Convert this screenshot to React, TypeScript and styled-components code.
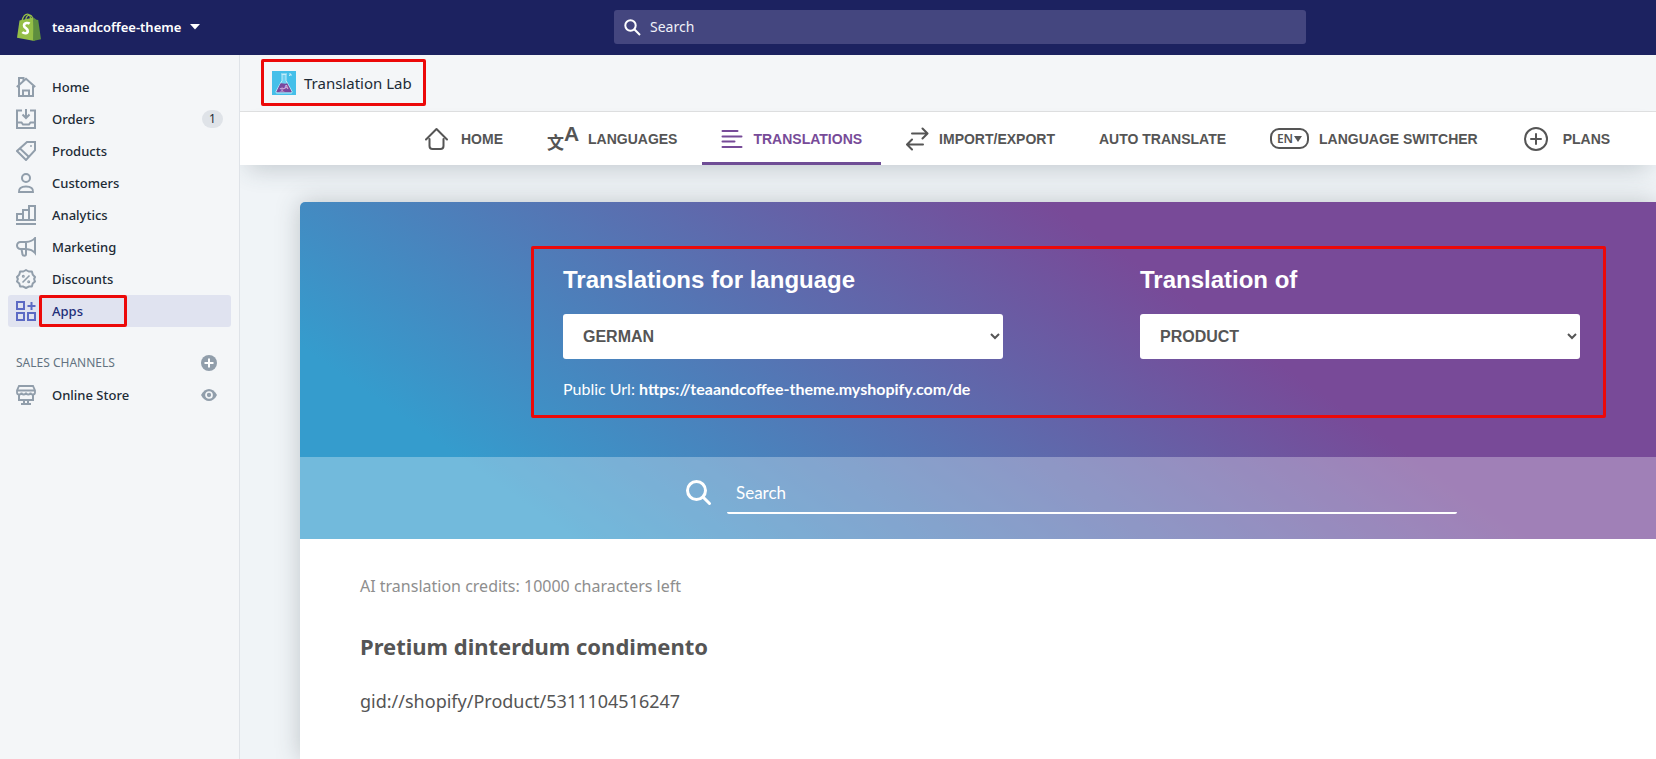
import React from 'react';
import styled, { createGlobalStyle, css } from 'styled-components';

const ui = '"Noto Sans", "Open Sans", sans-serif';
const arial = '"Liberation Sans", Arial, sans-serif';
const lato = 'Lato, "Noto Sans", sans-serif';

const GlobalStyle = createGlobalStyle`
  *, *::before, *::after { box-sizing: border-box; }
  body { margin: 0; font-family: ${ui}; background: #f4f6f8; color: #212b36; }
  h1, h2, p, ul { margin: 0; padding: 0; }
  ul { list-style: none; }
  a { color: inherit; text-decoration: none; }
  button { font: inherit; color: inherit; background: none; border: 0; padding: 0; cursor: pointer; }
  svg { display: block; flex: none; }
`;

const highlight = css`
  border: 3px solid #ec0909;
  border-radius: 2px;
`;

const Page = styled.div`
  display: flex;
  flex-direction: column;
  min-height: 100vh;
`;

const TopBar = styled.header`
  display: grid;
  grid-template-columns: 240px minmax(200px, 692px);
  column-gap: 374px;
  align-items: center;
  height: 55px;
  padding-bottom: 1px;
  background: #1c2260;
  color: #fff;
`;

const StoreButton = styled.button`
  display: flex;
  align-items: center;
  gap: 11px;
  padding-left: 16px;
  font-size: 13px;
  font-weight: 600;
  line-height: 20px;
`;

const StoreName = styled.span`
  display: flex;
  align-items: center;
  gap: 9px;
`;

const TopSearch = styled.label`
  display: flex;
  align-items: center;
  gap: 9px;
  height: 34px;
  padding: 0 10px;
  border-radius: 3px;
  background: #44467f;
`;

const TopSearchInput = styled.input`
  flex: 1;
  min-width: 0;
  border: 0;
  padding: 0;
  outline: 0;
  background: transparent;
  color: #fff;
  font: 14px/20px ${ui};
  &::placeholder { color: #f0f1f8; opacity: 1; }
`;

const Body = styled.div`
  display: flex;
  flex: 1;
`;

const Sidebar = styled.nav`
  flex: none;
  width: 240px;
  padding: 16px 8px;
  border-right: 1px solid #dfe3e8;
  background: #f4f6f8;
`;

const NavRow = styled.li<{ $active?: boolean }>`
  display: flex;
  align-items: center;
  height: 32px;
  padding-right: 14px;
  border-radius: 3px;
  background: ${p => (p.$active ? '#e0e3f0' : 'transparent')};
  color: ${p => (p.$active ? '#202e78' : '#212b36')};
`;

const NavLink = styled.a`
  position: relative;
  display: flex;
  flex: 1;
  align-items: center;
  gap: 16px;
  padding-left: 8px;
  font-size: 13px;
  font-weight: 500;
  line-height: 32px;
`;

const NavIcon = styled.svg<{ $active?: boolean }>`
  width: 20px;
  height: 20px;
  fill: none;
  stroke: ${p => (p.$active ? '#5c6ac4' : '#919eab')};
  stroke-width: 2;
`;

const AppsMark = styled.span`
  ${highlight}
  position: absolute;
  left: 31px;
  top: 0;
  width: 88px;
  height: 32px;
`;

const CountBadge = styled.span`
  min-width: 21px;
  margin-right: -6px;
  border-radius: 9px;
  background: #dfe3e8;
  color: #212b36;
  font-size: 12px;
  line-height: 18px;
  text-align: center;
`;

const SectionHead = styled.div`
  display: flex;
  align-items: center;
  justify-content: space-between;
  height: 32px;
  margin-top: 20px;
  padding: 0 14px 0 8px;
`;

const SectionTitle = styled.h2`
  color: #637381;
  font-size: 12px;
  font-weight: 400;
  line-height: 20px;
`;

const Main = styled.main`
  display: flex;
  flex: 1;
  flex-direction: column;
  min-width: 0;
  overflow: hidden;
  background: #f0f4f7;
`;

const AppHeader = styled.div`
  height: 57px;
  padding: 4px 0 0 21px;
  border-bottom: 1px solid #dfe0e1;
  background: #f4f6f8;
`;

const AppTitle = styled.h1`
  ${highlight}
  display: flex;
  align-items: center;
  gap: 8px;
  width: 165px;
  height: 47px;
  padding-left: 8px;
  font-size: 15px;
  font-weight: 400;
  line-height: 24px;
`;

const Tabs = styled.nav`
  display: flex;
  gap: 6px;
  height: 53px;
  padding-left: 166px;
  background: #fff;
  box-shadow: 0 12px 24px -8px rgba(50, 65, 80, 0.24);
`;

const Tab = styled.a<{ $active?: boolean }>`
  display: flex;
  flex: none;
  align-items: center;
  gap: 10px;
  padding: 3px 19px 0;
  border-bottom: 3px solid ${p => (p.$active ? '#6f4d96' : 'transparent')};
  color: ${p => (p.$active ? '#774b98' : '#555')};
  font: 700 14px/20px ${arial};
`;

const TabIcon = styled.svg`
  fill: none;
  stroke: currentColor;
  stroke-width: 2;
  stroke-linecap: round;
  stroke-linejoin: round;
`;

const LanguageGlyph = styled.span`
  display: flex;
  width: 31px;
  height: 26px;
  line-height: 20px;
`;

const Han = styled.span`
  align-self: flex-end;
  width: 17px;
  font: 700 17px/20px "Noto Sans CJK SC", sans-serif;
`;

const Latin = styled.span`
  font: 700 21px/16px ${arial};
`;

const EnPill = styled.span`
  display: flex;
  align-items: center;
  justify-content: center;
  gap: 1px;
  width: 39px;
  height: 21px;
  border: 2px solid currentColor;
  border-radius: 9px;
  font: 600 12px/17px "Noto Sans", sans-serif;
`;

const Card = styled.section`
  display: flex;
  flex: 1;
  flex-direction: column;
  margin: 37px 0 0 60px;
  border-radius: 5px 0 0 0;
  background: #fff;
  box-shadow: 0 0 24px rgba(50, 60, 70, 0.26);
`;

const Hero = styled.div`
  border-radius: 5px 0 0 0;
  background: linear-gradient(35deg, #359ccd 15%, #784a98 67%);
`;

const Filters = styled.div`
  padding: 44px 50px 39px 231px;
`;

const FilterFrame = styled.div`
  ${highlight}
  display: grid;
  grid-template-columns: 1fr 1fr;
  gap: 137px;
  height: 172px;
  padding: 17px 23px 0 29px;
`;

const Field = styled.div`
  display: flex;
  flex-direction: column;
  color: #fff;
`;

const FieldLabel = styled.label`
  margin-bottom: 20px;
  font: 700 24px/28px ${arial};
`;

const Select = styled.select`
  width: 100%;
  height: 45px;
  padding: 0 0 0 16px;
  border: 0;
  border-radius: 3px;
  background: #fff;
  color: #555;
  font: 700 16px/20px ${arial};
`;

const PublicUrl = styled.p`
  margin-top: 20px;
  font: 16px/20px ${lato};
`;

const SearchBand = styled.div`
  display: flex;
  align-items: center;
  gap: 15px;
  height: 82px;
  padding: 0 199px 14px 386px;
  background: rgba(255, 255, 255, 0.3);
`;

const SearchField = styled.input`
  flex: 1;
  min-width: 0;
  height: 46px;
  padding: 4px 9px 0;
  border: 0;
  border-bottom: 2px solid #fff;
  border-radius: 2px;
  outline: 0;
  background: transparent;
  color: #fff;
  font: 17px/24px ${lato};
  &::placeholder { color: #fff; opacity: 1; }
`;

const Content = styled.div`
  padding: 35px 60px;
  color: #555;
`;

const Credits = styled.p`
  color: #8e8e8e;
  font-size: 16px;
  line-height: 24px;
`;

const ProductName = styled.h2`
  margin-top: 33px;
  font-size: 22px;
  font-weight: 700;
  line-height: 30px;
`;

const ProductId = styled.p`
  margin-top: 28px;
  font-size: 18px;
  line-height: 24px;
`;

const ShopifyLogo = () => (
  <svg width="25" height="28" viewBox="0 0 25 28">
    <path d="M6 8C7 4 9 1.200 11.500 1.200c2 0 3 2.500 3.200 6M9.500 8c.5-4 2.500-6 4.500-5.800 1.500.2 2.500 2 2.800 4.800" fill="none" stroke="#95bf47" strokeWidth="1.300" />
    <path d="M3.500 7.600 17.500 4.500 18.500 28 1 24.800z" fill="#95bf47" />
    <path d="M17.500 4.500l3 2.200 1.700.3L25 26.300 17 28z" fill="#5e8e3e" />
    <path d="M13.600 10.600c-1.400-1-5.400-1-5.600 1.900-.1 2.600 4 2.800 3.800 5.600-.1 2.600-3.600 2.700-5.500 1" fill="none" stroke="#fff" strokeWidth="2.600" />
  </svg>
);

const Caret = () => (
  <svg width="10" height="6" viewBox="0 0 10 6"><path d="M0 0h10L5 5.500z" fill="#fff" /></svg>
);

const TopSearchIcon = () => (
  <svg width="17" height="17" viewBox="0 0 17 17" fill="none" stroke="#fff" strokeWidth="2">
    <circle cx="6.500" cy="6.500" r="5.200" /><path d="M10.300 10.300 16 16" />
  </svg>
);

const FlaskLogo = () => (
  <svg width="24" height="24" viewBox="0 0 24 24">
    <path d="M0 0h24v24H0z" fill="#45bfe9" />
    <path d="M10 3.500v6L4 20.500c-.4.900.2 1.500 1 1.500h14c.8 0 1.400-.6 1-1.500l-6-11v-6z" fill="#6fd0f0" stroke="#c4ecf9" />
    <path d="M8.400 12.500c2-1.200 4 1 6.800-.3l4.300 8c.3.700-.2 1.100-.8 1.100H5.300c-.6 0-1-.5-.7-1.100z" fill="#7a479c" />
    <path d="M9 3h6M17 5l2-2m0 0h-2m2 0v2" stroke="#c4ecf9" fill="none" />
    <text x="7.500" y="20" fontSize="5" fontFamily="Noto Sans CJK SC" fill="#e3c8ee">文</text>
    <text x="12" y="18" fontSize="6" fontWeight="700" fontFamily="Liberation Sans" fill="#e3c8ee">A</text>
  </svg>
);

const icons: Record<string, React.ReactNode> = {
  Home: <><path d="M.8 10 10 1.800 19.200 10" /><path d="M3 8.500V1h4.500v3M3 9v10h14V9" /><path d="M7 19v-5.500h6V19" /></>,
  Orders: <><path d="M6 1.500H1V19h18V1.500h-5M1 13.500h4.500l1.500 2h6l1.500-2H19" /><path d="M10 0v8.500M6.500 5.500 10 9l3.500-3.500" /></>,
  Products: <><path d="M11 1h8v8.200L10 19l-9-9z" /><path d="M4 7.500l9 8.500" /><circle cx="15" cy="5" r=".6" strokeWidth="1" /></>,
  Customers: <><circle cx="10" cy="5" r="4" /><path d="M3 19c-.5-3.500 2-5.500 7-5.500s7.500 2 7 5.500z" /></>,
  Analytics: <path d="M0 19h20M1 15V9h6v6zM7 15V5h6v10zM13 15V1h6v14z" />,
  Marketing: <path d="M10 5H4.500a3.500 3.500 0 0 0 0 7H10zM10 5c4-.3 7-1.500 9-4v15c-2-2.500-5-3.700-9-4M5.500 12l1 5.500c.3 1.500 3.500 2 3.500-.5v-5" />,
  Discounts: <><path d="M10 1l2.700 1.500 3.200.1.800 3L19 8l-.9 2L19 12.500l-2.300 2-.8 3-3.200.1L10 19l-2.700-1.400-3.200-.1-.8-3L1 12.500 1.900 10 1 8l2.300-2.400.8-3 3.200-.1z" strokeLinejoin="round" /><path d="M13.500 6.500l-7 7" strokeWidth="1.600" /><circle cx="7.300" cy="7.300" r=".9" strokeWidth="1.200" /><circle cx="12.700" cy="12.700" r=".9" strokeWidth="1.200" /></>,
  Apps: <path d="M1 1h7v7H1zM1 12h7v7H1zM12 12h7v7h-7zM15.500 1v8M11.500 5h8" />,
  'Online Store': <><path d="M3 1h14l2 4.500v2c0 1.400-1 2-2.200 2S14.500 8.600 14.500 7.500c0 1.200-1 2-2.200 2S10 8.600 10 7.500c0 1.200-1.100 2-2.300 2s-2.200-.8-2.200-2c0 1.200-1.100 2-2.300 2S1 8.900 1 7.500v-2zM1 5.500h18" strokeWidth="1.800" /><path d="M3 9.500V15h14V9.500M8 15v4M12 15v4M5 19h10" /></>,
};

const PlusCircle = () => (
  <svg width="16" height="16" viewBox="0 0 16 16">
    <circle cx="8" cy="8" r="8" fill="#919eab" /><path d="M8 3.500v9M3.500 8h9" stroke="#fff" strokeWidth="2" />
  </svg>
);

const Eye = () => (
  <svg width="16" height="12" viewBox="0 0 16 12">
    <path d="M0 6c2-4 5-6 8-6s6 2 8 6c-2 4-5 6-8 6S2 10 0 6z" fill="#919eab" />
    <circle cx="8" cy="6" r="3" fill="none" stroke="#f4f6f8" strokeWidth="1.700" />
  </svg>
);

const HouseIcon = () => (
  <TabIcon width="26" height="24" viewBox="0 0 26 24"><path d="M1 12.500 11.500 2 22 12.500M4.500 12v7q0 3 3 3h8q3 0 3-3v-7" /></TabIcon>
);
const LinesIcon = () => (
  <TabIcon width="22" height="18" viewBox="0 0 22 18"><path d="M1.500 1h15M1.500 6.500h19M1.500 11.500h12M1.500 17h19" /></TabIcon>
);
const SwapIcon = () => (
  <TabIcon width="23" height="24" viewBox="0 0 23 24"><path d="M6 6.500h15M16.500 1.500l5 5-5 5M17 17.500H2M6 12.500l-5 5 5 5" /></TabIcon>
);
const PlusIcon = () => (
  <TabIcon width="31" height="24" viewBox="0 0 31 24"><circle cx="14" cy="12" r="11" /><path d="M14 7v10M9 12h10" /></TabIcon>
);
const DownTriangle = () => (
  <svg width="8" height="6" viewBox="0 0 8 6"><path d="M0 0h8L4 6z" fill="currentColor" /></svg>
);
const SearchIcon = () => (
  <svg width="26" height="30" viewBox="0 -4 26 30" fill="none" stroke="#fff" strokeWidth="3" strokeLinecap="round">
    <circle cx="10.500" cy="10.500" r="9" /><path d="M17.500 17.500l6 6" />
  </svg>
);

const navItems = ['Home', 'Orders', 'Products', 'Customers', 'Analytics', 'Marketing', 'Discounts', 'Apps'];

const tabs: { label: string; icon?: React.ReactNode; active?: boolean }[] = [
  { label: 'HOME', icon: <HouseIcon /> },
  { label: 'LANGUAGES', icon: <LanguageGlyph><Han>文</Han><Latin>A</Latin></LanguageGlyph> },
  { label: 'TRANSLATIONS', icon: <LinesIcon />, active: true },
  { label: 'IMPORT/EXPORT', icon: <SwapIcon /> },
  { label: 'AUTO TRANSLATE' },
  { label: 'LANGUAGE SWITCHER', icon: <EnPill>EN<DownTriangle /></EnPill> },
  { label: 'PLANS', icon: <PlusIcon /> },
];

export default function App() {
  return (
    <Page>
      <GlobalStyle />
      <TopBar>
        <StoreButton type="button">
          <ShopifyLogo />
          <StoreName>teaandcoffee-theme <Caret /></StoreName>
        </StoreButton>
        <TopSearch>
          <TopSearchIcon />
          <TopSearchInput type="search" placeholder="Search" aria-label="Search store" />
        </TopSearch>
      </TopBar>
      <Body>
        <Sidebar>
          <ul>
            {navItems.map(name => (
              <NavRow key={name} $active={name === 'Apps'}>
                <NavLink href="#">
                  <NavIcon viewBox="0 0 20 20" $active={name === 'Apps'}>{icons[name]}</NavIcon>
                  {name}
                  {name === 'Apps' && <AppsMark />}
                </NavLink>
                {name === 'Orders' && <CountBadge>1</CountBadge>}
              </NavRow>
            ))}
          </ul>
          <SectionHead>
            <SectionTitle>SALES CHANNELS</SectionTitle>
            <button type="button" aria-label="Add sales channel"><PlusCircle /></button>
          </SectionHead>
          <ul>
            <NavRow>
              <NavLink href="#">
                <NavIcon viewBox="0 0 20 20">{icons['Online Store']}</NavIcon>
                Online Store
              </NavLink>
              <button type="button" aria-label="View store"><Eye /></button>
            </NavRow>
          </ul>
        </Sidebar>
        <Main>
          <AppHeader>
            <AppTitle><FlaskLogo />Translation Lab</AppTitle>
          </AppHeader>
          <Tabs>
            {tabs.map(t => (
              <Tab key={t.label} href="#" $active={t.active}>{t.icon}{t.label}</Tab>
            ))}
          </Tabs>
          <Card>
            <Hero>
              <Filters>
                <FilterFrame>
                  <Field>
                    <FieldLabel htmlFor="language">Translations for language</FieldLabel>
                    <Select id="language"><option>GERMAN</option></Select>
                    <PublicUrl>Public Url: <b>https://teaandcoffee-theme.myshopify.com/de</b></PublicUrl>
                  </Field>
                  <Field>
                    <FieldLabel htmlFor="resource">Translation of</FieldLabel>
                    <Select id="resource"><option>PRODUCT</option></Select>
                  </Field>
                </FilterFrame>
              </Filters>
              <SearchBand>
                <SearchIcon />
                <SearchField type="search" placeholder="Search" aria-label="Search translations" />
              </SearchBand>
            </Hero>
            <Content>
              <Credits>AI translation credits: 10000 characters left</Credits>
              <ProductName>Pretium dinterdum condimento</ProductName>
              <ProductId>gid://shopify/Product/5311104516247</ProductId>
            </Content>
          </Card>
        </Main>
      </Body>
    </Page>
  );
}
